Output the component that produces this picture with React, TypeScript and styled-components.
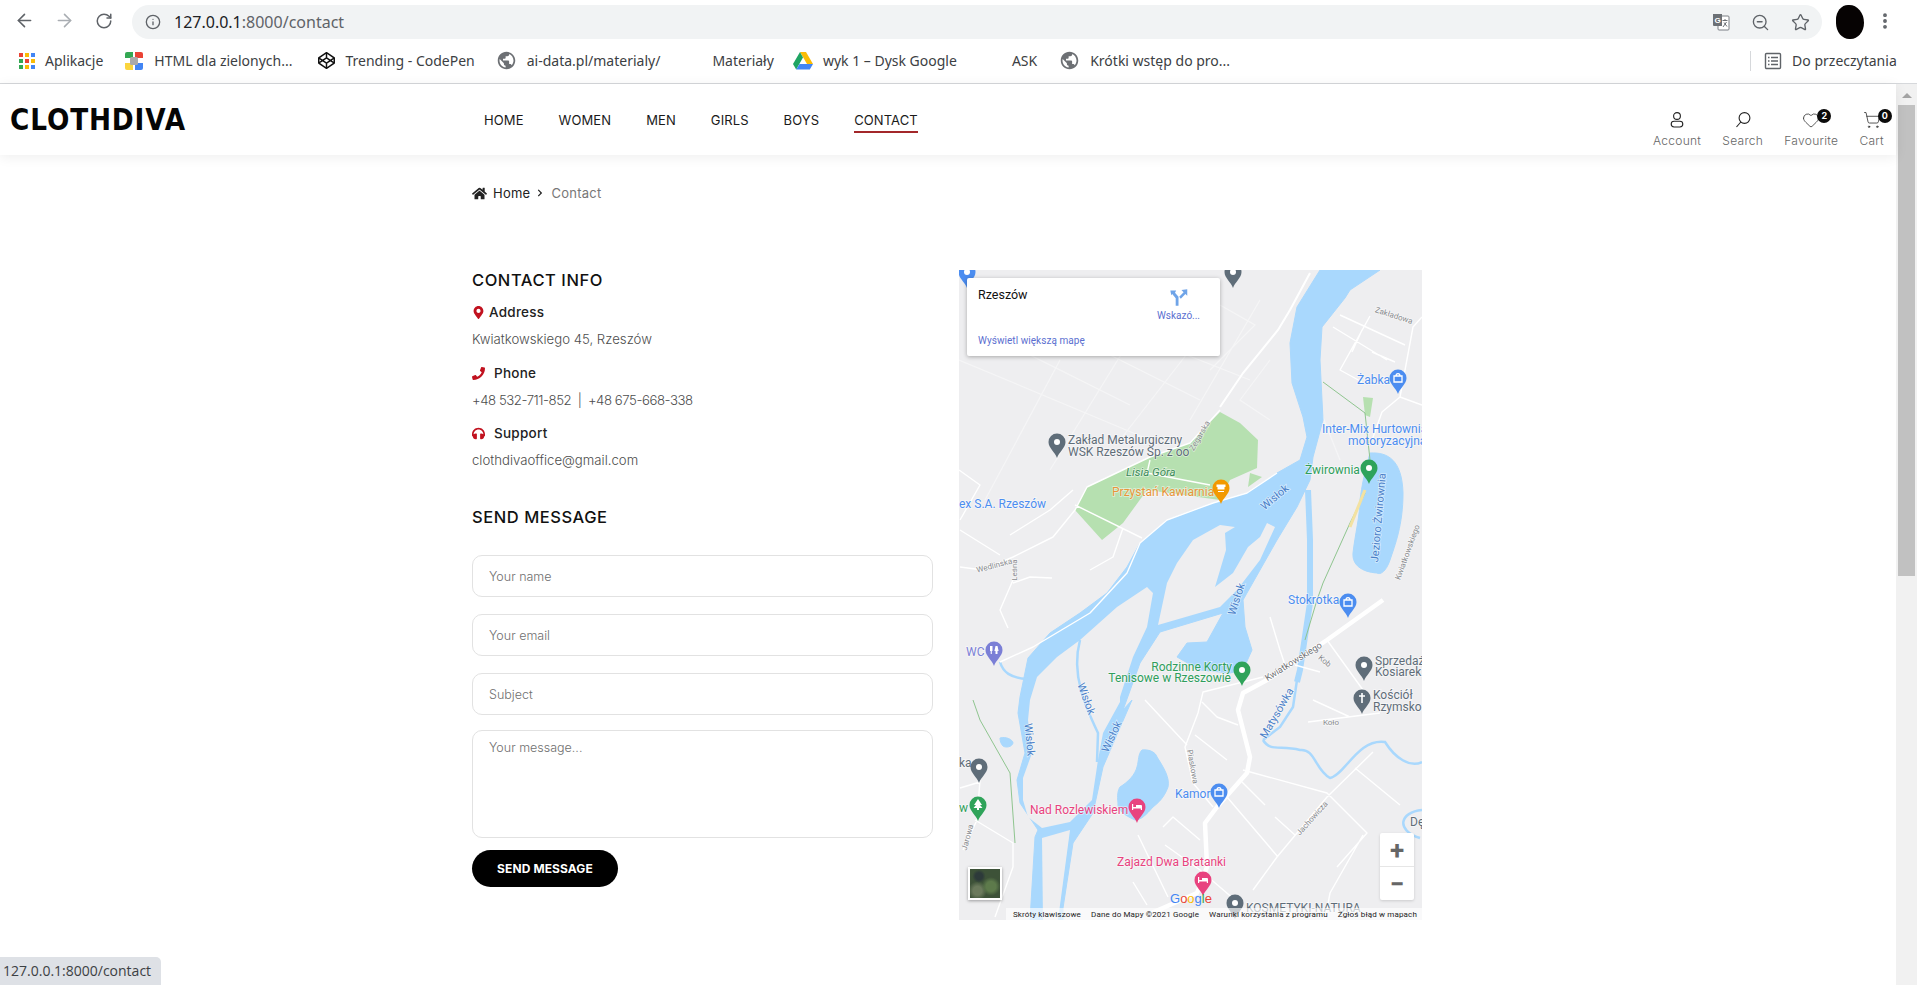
import React from "react";
import styled, { createGlobalStyle } from "styled-components";
import {
  ArrowLeft,
  ArrowRight,
  RotateCw,
  Info,
  ZoomOut,
  Star,
  EllipsisVertical,
  Heart,
  ShoppingCart,
} from "lucide-react";
import { FaHome, FaMapMarkerAlt, FaPhone, FaHeadphones, FaCodepen, FaChevronRight } from "react-icons/fa";
import { MdPublic } from "react-icons/md";

const SITE_FONT = `Inter, "Noto Sans", sans-serif`;
const BROWSER_FONT = `"Noto Sans", "Open Sans", sans-serif`;
const MAP_FONT = `Roboto, "Liberation Sans", sans-serif`;

const GlobalStyle = createGlobalStyle`
  html, body {
    margin: 0;
    padding: 0;
    height: 100%;
    overflow: hidden;
    background: #fff;
  }
  * { box-sizing: border-box; }
`;

const Screen = styled.div`
  position: relative;
  height: 985px;
  display: flex;
  flex-direction: column;
  overflow: hidden;
  font-family: ${SITE_FONT};
`;

/* browser chrome */
const Toolbar = styled.div`
  height: 41px;
  display: flex;
  align-items: center;
  padding-left: 13px;
  background: #fff;
  color: #5f6368;
`;
const NavIcon = styled.div<{ $faded?: boolean }>`
  width: 22px;
  height: 22px;
  margin-right: 18px;
  display: flex;
  align-items: center;
  justify-content: center;
  color: ${(p) => (p.$faded ? "#a9adb2" : "#5f6368")};
`;
const Omnibox = styled.div`
  width: 1690px;
  height: 34px;
  margin-left: -1px;
  margin-top: 3px;
  border-radius: 17px;
  background: #f1f3f4;
  display: flex;
  align-items: center;
  padding: 0 13px;
`;
const Url = styled.div`
  margin-left: 13px;
  flex: 1;
  font: 400 16px ${BROWSER_FONT};
  color: #5f6368;
  span { color: #202124; }
`;
const OmniIcons = styled.div`
  display: flex;
  align-items: center;
  gap: 21px;
  margin-right: -1px;
`;
const Avatar = styled.div`
  width: 28px;
  height: 34px;
  margin-left: 14px;
  margin-top: 2px;
  border-radius: 45% 55% 50% 50%;
  background: #060303;
`;
const Kebab = styled.div`
  margin-left: 11px;
  color: #5f6368;
  display: flex;
`;
const Bookmarks = styled.div`
  height: 43px;
  display: flex;
  align-items: center;
  background: #fff;
  border-bottom: 1px solid #d6d8db;
  padding-bottom: 3px;
  font: 400 14px ${BROWSER_FONT};
  color: #3c4043;
`;
const Bookmark = styled.div<{ $left: number }>`
  display: flex;
  align-items: center;
  gap: 10px;
  margin-left: ${(p) => p.$left}px;
  white-space: nowrap;
`;
const BookmarkSep = styled.div`
  width: 1px;
  height: 20px;
  background: #d6d8db;
  margin-left: 520px;
`;

/* page */
const Viewport = styled.div`
  flex: 1;
  display: flex;
  min-height: 0;
`;
const Page = styled.div`
  flex: 1;
  min-width: 0;
  background: #fff;
`;
const Scrollbar = styled.div`
  width: 21px;
  background: #f1f1f1;
  display: flex;
  flex-direction: column;
  align-items: center;
  padding-top: 9px;
`;
const ScrollArrow = styled.div`
  width: 0;
  height: 0;
  border-left: 5px solid transparent;
  border-right: 5px solid transparent;
  border-bottom: 5px solid #a3a3a3;
`;
const ScrollThumb = styled.div`
  width: 17px;
  height: 471px;
  margin-top: 7px;
  background: #c1c1c1;
`;

const Header = styled.header`
  height: 71px;
  display: flex;
  align-items: center;
  background: #fff;
  box-shadow: 0 2px 12px rgba(0, 0, 0, 0.07);
  position: relative;
`;
const Logo = styled.div`
  width: 484px;
  padding-left: 10px;
  margin-top: -1px;
  font: 700 31px "DejaVu Sans", sans-serif;
  letter-spacing: 1px;
  color: #050505;
  transform-origin: 10px center;
  transform: scaleX(0.85);
  white-space: nowrap;
`;
const Nav = styled.nav`
  display: flex;
  gap: 35px;
  flex: 1;
  margin-top: 1px;
`;
const NavLink = styled.a<{ $active?: boolean }>`
  font-size: 13px;
  font-weight: 400;
  letter-spacing: 0.1px;
  color: #1a1a1a;
  padding-bottom: 3px;
  border-bottom: 2px solid ${(p) => (p.$active ? "#a3272a" : "transparent")};
  margin-top: 5px;
`;
const Tools = styled.div`
  display: flex;
  gap: 21px;
  padding-right: 12px;
  margin-top: 20px;
`;
const Tool = styled.div`
  position: relative;
  display: flex;
  flex-direction: column;
  align-items: center;
  gap: 4px;
  font-size: 12px;
  letter-spacing: 0.3px;
  font-weight: 300;
  color: #666;
  svg { color: #222; display: block; }
`;
const ToolBadge = styled.span`
  position: absolute;
  top: -2px;
  left: calc(50% + 6px);
  width: 14px;
  height: 14px;
  border-radius: 50%;
  background: #0b0b0b;
  color: #fff;
  font-size: 9px;
  font-weight: 700;
  line-height: 14px;
  letter-spacing: 0;
  text-align: center;
`;

const Content = styled.main`
  padding: 30px 0 0 472px;
`;
const Crumbs = styled.div`
  height: 16px;
  display: flex;
  align-items: center;
  font-size: 13px;
  color: #222;
  letter-spacing: 0.25px;
`;
const CrumbHome = styled.span`
  margin-left: 6px;
`;
const CrumbArrow = styled.span`
  display: flex;
  margin: 0 7px 0 6px;
`;
const CrumbCurrent = styled.span`
  color: #777;
`;
const Columns = styled.div`
  display: grid;
  grid-template-columns: 461px 463px;
  column-gap: 26px;
  margin-top: 69px;
`;
const Side = styled.section`
  display: flex;
  flex-direction: column;
`;
const Heading = styled.h2<{ $top: number }>`
  margin: ${(p) => p.$top}px 0 0;
  font-size: 16.5px;
  font-weight: 500;
  line-height: 20px;
  letter-spacing: 0.55px;
  color: #111;
`;
const InfoTitle = styled.div<{ $top: number; $gap: number }>`
  display: flex;
  align-items: center;
  gap: ${(p) => p.$gap}px;
  margin-top: ${(p) => p.$top}px;
  height: 18px;
  font-size: 13.5px;
  font-weight: 500;
  letter-spacing: 0.25px;
  color: #222;
  svg { color: #c1121f; }
`;
const InfoText = styled.div<{ $tight?: boolean }>`
  margin-top: 9px;
  height: 18px;
  line-height: 18px;
  font-size: 13.2px;
  font-weight: 300;
  letter-spacing: ${(p) => (p.$tight ? "-0.45px" : "0")};
  color: #4d4d4d;
  white-space: pre;
`;
const Form = styled.form`
  display: flex;
  flex-direction: column;
  margin-top: 28px;
`;
const Field = styled.input`
  width: 100%;
  height: 42px;
  margin-bottom: 17px;
  padding: 0 16px;
  border: 1px solid #e2e2e2;
  border-radius: 10px;
  outline: none;
  background: #fff;
  font: 300 12.5px ${SITE_FONT};
  &::placeholder { color: #6f6f6f; opacity: 1; }
`;
const Message = styled.textarea`
  width: 100%;
  height: 108px;
  margin-top: -2px;
  padding: 9px 16px;
  border: 1px solid #e2e2e2;
  border-radius: 10px;
  outline: none;
  resize: none;
  background: #fff;
  font: 300 12.5px ${SITE_FONT};
  &::placeholder { color: #6f6f6f; opacity: 1; }
`;
const SendButton = styled.button`
  width: 146px;
  height: 37px;
  margin-top: 12px;
  border: none;
  border-radius: 19px;
  background: #000;
  color: #fff;
  font: 700 12px ${SITE_FONT};
  letter-spacing: 0.1px;
`;

const StatusBubble = styled.div`
  position: absolute;
  left: 0;
  bottom: 0;
  width: 161px;
  height: 28px;
  padding-left: 3px;
  border-top-right-radius: 5px;
  background: #dee1e6;
  color: #3c4043;
  font: 400 14px/28px "Open Sans", ${BROWSER_FONT};
  white-space: nowrap;
`;

/* map */
const MapFrame = styled.div`
  position: relative;
  width: 463px;
  height: 650px;
  overflow: hidden;
  background: #eeeef0;
  svg.base { display: block; }
`;
const MapCard = styled.div`
  position: absolute;
  top: 8px;
  left: 8px;
  width: 253px;
  height: 78px;
  padding: 9px 11px 10px;
  background: #fff;
  border-radius: 2px;
  box-shadow: 0 1px 4px rgba(0, 0, 0, 0.3);
  font-family: ${MAP_FONT};
  display: grid;
  grid-template-columns: 1fr auto;
`;
const PlaceName = styled.div`
  font-size: 12.5px;
  font-weight: 400;
  color: #111;
`;
const Directions = styled.div`
  display: flex;
  flex-direction: column;
  align-items: center;
  gap: 2px;
  margin-right: 9px;
  font-size: 10px;
  color: #5b6fd0;
`;
const BiggerMap = styled.div`
  grid-column: 1 / 3;
  align-self: end;
  font-size: 10px;
  letter-spacing: 0.05px;
  color: #5b6fd0;
`;
const ZoomBox = styled.div`
  position: absolute;
  right: 8px;
  bottom: 20px;
  width: 34px;
  height: 67px;
  display: flex;
  flex-direction: column;
  background: #fff;
  border-radius: 2px;
  box-shadow: 0 1px 3px rgba(0, 0, 0, 0.15);
`;
const ZoomButton = styled.div<{ $top?: boolean }>`
  flex: 1;
  display: flex;
  align-items: center;
  justify-content: center;
  position: relative;
  color: #666;
  font: 700 26px/1 ${MAP_FONT};
  border-top: ${(p) => (p.$top ? "none" : "1px solid #e6e6e6")};
`;
const Satellite = styled.div`
  position: absolute;
  left: 9px;
  bottom: 20px;
  width: 34px;
  height: 33px;
  border: 2px solid #fff;
  box-shadow: 0 1px 3px rgba(0, 0, 0, 0.35);
  background:
    radial-gradient(circle at 30% 25%, #2d3a3a 0 12%, transparent 22%),
    radial-gradient(circle at 70% 60%, #5d7a4b 0 18%, transparent 34%),
    radial-gradient(circle at 25% 75%, #6b7a5c 0 14%, transparent 30%),
    #3d5238;
`;
const Attribution = styled.div`
  position: absolute;
  right: 0;
  bottom: 0;
  left: 47px;
  height: 12px;
  display: flex;
  justify-content: flex-end;
  align-items: center;
  gap: 10px;
  padding-right: 5px;
  background: rgba(255, 255, 255, 0.65);
  font: 400 8px ${MAP_FONT};
  letter-spacing: 0.15px;
  color: #222;
  white-space: nowrap;
`;
const MapText = styled.text<{ $color: string; $size?: number; $italic?: boolean }>`
  font-family: ${MAP_FONT};
  font-size: ${(p) => p.$size ?? 12}px;
  font-style: ${(p) => (p.$italic ? "italic" : "normal")};
  fill: ${(p) => p.$color};
  paint-order: stroke;
  stroke: rgba(255, 255, 255, 0.55);
  stroke-width: 1.5px;
`;

const GRAY = "#5f6d79";
const BLUE = "#4c8df0";
const GREEN = "#2f9e5c";
const PINK = "#e8437f";
const ORANGE = "#e8953a";
const RIVER = "#4a80c8";
const STREET = "#8a8c90";

const WATER = "#a9d8fd";
const LAND = "#eeeef0";

const water = [
  // main river and both western branches
  "M1320 270 L1380 270 L1350 290 L1345 298 L1322 327 L1320 360 L1323 420 L1313 457 L1310 480 L1297 507 L1277 540 L1243 600 L1245 627 L1252 650 L1243 670 L1230 673 L1200 670 L1177 657 L1187 643 L1207 642 L1223 613 L1160 632 L1140 663 L1123 710 L1132 700 L1103 767 L1093 813 L1073 843 L1063 908 L1063 920 L1030 920 L1035 837 L1038 830 L1020 803 L1017 780 L1025 753 L1018 713 L1020 697 L1028 658 L1050 633 L1080 613 L1107 593 L1127 567 L1140 543 L1167 520 L1213 503 L1247 493 L1277 473 L1300 460 L1307 437 L1303 417 L1292 383 L1290 343 L1297 307 Z",
  // Zwirownia lake
  "M1370 453 C1388 452 1402 460 1403 493 C1403 525 1395 545 1390 560 C1386 572 1380 575 1377 573 C1362 572 1352 565 1353 553 C1355 535 1360 515 1360 500 C1362 485 1364 475 1370 453 Z",
  // Rozlewisko
  "M1142 750 C1150 749 1156 753 1157 757 C1164 768 1170 778 1168 787 C1164 798 1158 803 1153 807 C1146 815 1141 820 1135 820 C1124 815 1117 810 1118 803 C1117 795 1118 790 1120 787 C1128 782 1135 775 1137 767 C1139 760 1138 754 1142 750 Z",
  "M1000 738 C1006 736 1013 740 1013 743 C1012 747 1006 748 1003 746 C1001 744 1000 741 1000 738 Z",
];

const land = [
  "M1235 527 L1225 533 L1226 550 L1215 587 L1233 573 L1248 547 L1260 537 L1267 523 L1275 527 L1260 560 L1237 590 L1220 607 L1158 625 L1167 583 L1177 563 L1193 540 L1220 525 Z",
  "M1147 587 L1153 593 L1147 627 L1133 657 L1120 697 L1120 702 L1103 733 L1098 760 L1092 800 L1070 822 L1042 828 L1028 817 L1023 800 L1023 778 L1032 753 L1028 720 L1030 700 L1037 677 L1057 657 L1080 640 L1117 607 Z",
  "M1042 838 L1070 830 L1058 920 L1043 920 Z",
];

const parks = [
  "M1220 412 L1240 423 L1258 440 L1257 468 L1230 480 L1220 500 L1147 490 L1123 523 L1102 540 L1075 510 L1087 487 L1150 457 L1190 443 Z",
  "M1248 487 L1262 477 L1250 473 Z",
  "M1363 397 L1373 398 L1370 417 L1365 415 Z",
];

const streams = [
  "M1080 640 C1076 655 1076 672 1081 690 C1084 702 1088 712 1098 733 L1097 762",
  "M1297 680 L1293 707 L1280 727 L1263 740",
  "M1308 490 L1310 540 L1310 603 L1300 670 L1297 682",
  "M1000 662 C1003 672 1010 678 1028 679",
  "M1263 740 C1270 752 1280 745 1300 750 C1315 748 1315 770 1330 778 C1345 775 1358 738 1385 742 C1395 758 1410 768 1422 762",
  "M1422 810 C1400 812 1395 830 1420 838",
];

const minorRoads = [
  "M1220 410 L1190 443 L1150 457 L1087 487 L1075 510 L1053 537 L1013 557 L983 570 L960 567",
  "M1075 505 L1142 538",
  "M1150 460 L1147 473 L1210 485",
  "M1000 662 L1033 647 L1090 613 L1127 573 L1140 543 L1167 520 L1213 503 L1247 493 L1277 473",
  "M1013 580 L1000 610 L1008 628",
  "M1013 583 L1030 577 L1052 578",
  "M1123 528 L1113 557 L1090 570",
  "M1422 317 L1413 327 L1400 397 L1422 405",
  "M1400 397 L1382 412 L1372 440",
  "M1333 327 L1387 360",
  "M1340 315 L1405 345",
  "M1370 316 L1340 370 L1362 382",
  "M1362 330 L1352 352 M1372 352 L1395 362",
  "M1327 640 L1363 690",
  "M1313 700 L1350 717",
  "M1308 722 L1380 713",
  "M1243 770 L1327 793 L1367 833 L1337 867",
  "M1373 752 L1327 797 L1277 857 L1253 890",
  "M1355 768 L1400 805",
  "M1227 797 L1278 857",
  "M1242 782 L1265 805",
  "M1275 817 L1295 835",
  "M1263 677 L1203 692 L1198 713 L1185 747 L1193 783 L1213 807",
  "M1195 735 L1227 760",
  "M1202 702 L1217 717 L1238 725",
  "M1363 835 L1330 893 L1325 920",
  "M975 820 L1013 843 L1013 867 L995 917",
  "M963 850 L977 820 L980 780",
  "M960 788 L980 782",
  "M1138 835 L1168 897",
  "M1165 845 L1200 870 L1235 900",
  "M1133 882 L1147 905",
  "M1163 827 L1173 817 L1200 840",
  "M1145 700 L1187 745",
  "M1270 617 L1280 650 L1285 665",
  "M959 470 L980 485 L960 520",
  "M1000 555 L960 530",
  "M1073 490 L1050 510 L1010 535",
  "M1295 665 L1320 672",
];

const faintRoads = [
  "M959 360 L1150 440 M980 330 L1130 405 M1000 300 L1200 400 M1010 285 L1250 380",
  "M1060 360 L985 500 M1130 340 L1050 470 M1190 350 L1120 440 M1260 300 L1190 420",
  "M1270 360 L1240 400 L1270 420",
  "M1120 280 L1090 310 M1220 305 L1255 325 L1210 370",
  "M1340 460 L1320 410",
];

const trails = [
  "M973 700 L980 720 L1010 773 L1015 843",
  "M1323 382 L1365 413 L1370 460",
  "M1365 493 L1350 523 L1323 583 L1317 600 L1305 640",
];

const pins: [number, number, string, string?][] = [
  [967, 272, BLUE],
  [1233, 272, GRAY],
  [1057, 442, GRAY],
  [1398, 378, BLUE, "bag"],
  [1369, 468, "#2fa35a"],
  [1221, 488, "#f29900", "cup"],
  [1348, 602, BLUE, "bag"],
  [994, 650, "#7b7fd6", "wc"],
  [1242, 670, "#2fa35a"],
  [1364, 665, GRAY],
  [1362, 698, GRAY, "cross"],
  [979, 767, GRAY],
  [978, 805, "#2fa35a", "tree"],
  [1137, 807, PINK, "bed"],
  [1219, 792, BLUE, "bag"],
  [1203, 880, PINK, "bed"],
  [1235, 903, GRAY],
];

const labels: [string, number, number, string, number?, number?, ("end" | "middle")?, boolean?][] = [
  ["Zakład Metalurgiczny", 1068, 444, GRAY],
  ["WSK Rzeszów Sp. z oo", 1068, 456, GRAY],
  ["Lisia Góra", 1126, 476, "#3c8a5a", 11.5, 0, undefined, true],
  ["Przystań Kawiarnia", 1112, 496, ORANGE],
  ["ex S.A. Rzeszów", 959, 508, BLUE],
  ["Żabka", 1357, 384, BLUE],
  ["Inter-Mix Hurtownia", 1322, 433, BLUE],
  ["motoryzacyjna", 1348, 445, BLUE],
  ["Żwirownia", 1305, 474, GREEN],
  ["Stokrotka", 1288, 604, BLUE],
  ["Rodzinne Korty", 1232, 671, GREEN, 12, 0, "end"],
  ["Tenisowe w Rzeszowie", 1231, 682, GREEN, 12, 0, "end"],
  ["WC", 966, 656, "#7b7fd6"],
  ["Sprzedaż", 1375, 665, GRAY],
  ["Kosiarek", 1375, 676, GRAY],
  ["Kościół", 1373, 699, GRAY],
  ["Rzymskol", 1373, 711, GRAY],
  ["Nad Rozlewiskiem", 1030, 814, PINK],
  ["Kamor", 1175, 798, BLUE],
  ["Zajazd Dwa Bratanki", 1117, 866, PINK],
  ["KOSMETYKI-NATURA", 1246, 912, GRAY],
  ["ka", 959, 767, GRAY],
  ["w", 959, 812, GREEN],
  ["Dę", 1410, 826, GRAY],
  ["Wisłok", 1277, 500, RIVER, 11, -40, "middle"],
  ["Wisłok", 1240, 600, RIVER, 11, -72, "middle"],
  ["Wisłok", 1083, 700, RIVER, 11, 70, "middle"],
  ["Wisłok", 1026, 740, RIVER, 11, 85, "middle"],
  ["Wisłok", 1115, 738, RIVER, 11, -65, "middle"],
  ["Jezioro Żwirownia", 1382, 518, RIVER, 11, -85, "middle"],
  ["Matysówka", 1280, 715, RIVER, 11, -60, "middle"],
  ["Zakładowa", 1393, 318, STREET, 8, 18, "middle"],
  ["Zegarska", 1202, 437, STREET, 8, -60, "middle"],
  ["Kwiatkowskiego", 1410, 553, STREET, 8, -70, "middle"],
  ["Kwiatkowskiego", 1295, 664, "#6f7175", 9, -32, "middle"],
  ["Wedlinska", 995, 568, STREET, 8, -15, "middle"],
  ["Leśna", 1017, 570, STREET, 8, -90, "middle"],
  ["Piaskowa", 1190, 767, STREET, 8, 80, "middle"],
  ["Jachowicza", 1314, 820, STREET, 8, -48, "middle"],
  ["Koło", 1331, 725, STREET, 8, 0, "middle"],
  ["Kob", 1323, 663, STREET, 8, 40, "middle"],
  ["Jarowa", 970, 838, STREET, 8, -75, "middle"],
];

const PinGlyph = ({ kind }: { kind?: string }) => {
  if (kind === "cross") return <path d="M0 -5V5M-3 -2H3" stroke="#fff" strokeWidth="1.6" />;
  if (kind === "tree") return <path d="M0 -6L4 0H2L4.5 3H1V5H-1V3H-4.5L-2 0H-4Z" fill="#fff" />;
  if (kind === "cup") return <path d="M-4.5 -3.5H4.5V-1H3.5V1.5H-3.5V-1H-4.5ZM-3 3H3V4H-3Z" fill="#fff" />;
  if (kind === "bed") return <path d="M-5 -3H-3.8V0H-1V-2H4A1 1 0 0 1 5 -1V3H3.8V1.5H-3.8V3H-5Z" fill="#fff" />;
  if (kind === "bag") return <path d="M-4 -2H4V4H-4ZM-2 -2A2 2.4 0 0 1 2 -2" fill="none" stroke="#fff" strokeWidth="1.3" />;
  if (kind === "wc") return <path d="M-4 -4H-1.5V1H-2.2V4H-3.3V1H-4ZM1.5 -4H3.5L4.6 1H3.5V4H1.5V1H.4Z" fill="#fff" />;
  return <circle r="3" fill="#fff" />;
};

const MapDrawing = () => (
  <svg className="base" width="463" height="650" viewBox="959 270 463 650">
    <rect x="959" y="270" width="463" height="650" fill={LAND} />
    <path d={faintRoads.join(" ")} fill="none" stroke="#f5f5f6" strokeWidth="1.2" />
    {parks.map((d) => (
      <path key={d} d={d} fill="#b6e0b0" />
    ))}
    {water.map((d) => (
      <path key={d} d={d} fill={WATER} strokeLinejoin="round" stroke={WATER} strokeWidth="1" />
    ))}
    {land.map((d) => (
      <path key={d} d={d} fill={LAND} strokeLinejoin="round" />
    ))}
    {streams.map((d) => (
      <path key={d} d={d} fill="none" stroke={WATER} strokeWidth={d.startsWith("M1308") ? 6 : 2.5} />
    ))}
    <path d={minorRoads.join(" ")} fill="none" stroke="#fff" strokeWidth="1.4" strokeLinejoin="round" />
    <path
      d="M1310 273 L1290 310 L1278 330 L1243 373 L1220 407"
      fill="none"
      stroke="#fff"
      strokeWidth="2"
    />
    <path
      d="M1383 600 L1327 640 L1267 680 L1243 693 L1238 710 L1250 757 L1247 773 L1217 807 L1205 823 L1207 867 L1197 893 L1147 915"
      fill="none"
      stroke="#fff"
      strokeWidth="4.5"
      strokeLinejoin="round"
    />
    <path d={trails.join(" ")} fill="none" stroke="#8fc58f" strokeWidth="1" />
    <path d="M1365 490 L1350 527" fill="none" stroke="#f3e2a2" strokeWidth="3" />
    {labels.map(([text, x, y, color, size, rotate, anchor, italic]) => (
      <MapText
        key={text + x}
        x={x}
        y={y}
        $color={color}
        $size={size}
        $italic={italic}
        textAnchor={anchor}
        transform={rotate ? `rotate(${rotate} ${x} ${y})` : undefined}
      >
        {text}
      </MapText>
    ))}
    {pins.map(([x, y, color, kind]) => (
      <g key={`${x}-${y}`} transform={`translate(${x} ${y})`}>
        <path d="M0 16C-2 10 -8.5 6 -8.5 0A8.5 8.5 0 1 1 8.5 0C8.5 6 2 10 0 16Z" fill={color} />
        <PinGlyph kind={kind} />
      </g>
    ))}
    <text x="1170" y="903" fontFamily="'Liberation Sans', sans-serif" fontSize="13" fontWeight="400">
      <tspan fill="#4285f4">G</tspan>
      <tspan fill="#ea4335">o</tspan>
      <tspan fill="#fbbc05">o</tspan>
      <tspan fill="#4285f4">g</tspan>
      <tspan fill="#34a853">l</tspan>
      <tspan fill="#ea4335">e</tspan>
    </text>
  </svg>
);

const AppsIcon = () => {
  const colors = ["#ea4335", "#fbbc05", "#4285f4", "#34a853", "#ea4335", "#fbbc05", "#34a853", "#fbbc05", "#4285f4"];
  return (
    <svg width="16" height="16" viewBox="0 0 16 16">
      {colors.map((c, i) => (
        <rect key={i} x={(i % 3) * 6} y={Math.floor(i / 3) * 6} width="4" height="4" fill={c} />
      ))}
    </svg>
  );
};

const HtmlIcon = () => (
  <svg width="20" height="20" viewBox="0 0 20 20">
    <path d="M1 3a2 2 0 0 1 2-2h6v6H1z" fill="#34a853" />
    <path d="M11 1h6a2 2 0 0 1 2 2v4h-8z" fill="#ea4335" />
    <path d="M1 12h8v7H3a2 2 0 0 1-2-2z" fill="#fbd53e" />
    <path d="M11 12h8v5a2 2 0 0 1-2 2h-6z" fill="#4285f4" />
    <rect x="6" y="6" width="8" height="8" rx="1.5" fill="#aaa" />
  </svg>
);

const DriveIcon = () => (
  <svg width="20" height="18" viewBox="0 0 20 18">
    <path d="M7 0h6l7 12h-6z" fill="#fbbc05" />
    <path d="M7 0l3 5.5L3.2 17.5 0 12z" fill="#1fa463" />
    <path d="M3.2 17.5L6.5 12H20l-3.2 5.5z" fill="#4285f4" />
  </svg>
);

const TranslateIcon = () => (
  <svg width="18" height="18" viewBox="0 0 18 18">
    <rect x="6" y="3" width="11" height="14" rx="1" fill="#fff" stroke="#7b7f84" />
    <path d="M1 1h9v12H2a1 1 0 0 1-1-1z" fill="#6c7075" />
    <text x="2.6" y="10" fontSize="8" fontWeight="700" fill="#fff" fontFamily="'Liberation Sans', sans-serif">
      G
    </text>
    <path d="M10.5 7.5h5M13 6v1.5M11 14l3.5-5M12 9.5l3 4" stroke="#6c7075" strokeWidth="1" fill="none" />
  </svg>
);

const ReadingIcon = () => (
  <svg width="18" height="18" viewBox="0 0 18 18" fill="none" stroke="#5f6368" strokeWidth="1.4">
    <rect x="1.5" y="1.5" width="15" height="15" rx="1" />
    <path d="M4 5.5h1.5M7 5.5h7M4 9h1.5M7 9h7M4 12.5h1.5M7 12.5h7" />
  </svg>
);

const AccountIcon = () => (
  <svg width="18" height="18" viewBox="0 0 18 18" fill="none" stroke="#222" strokeWidth="1.1">
    <circle cx="9" cy="5" r="3.4" />
    <rect x="3.2" y="10.2" width="11.6" height="5.8" rx="2.9" />
  </svg>
);

const SearchIcon = () => (
  <svg width="18" height="18" viewBox="0 0 18 18" fill="none" stroke="#222" strokeWidth="1.1">
    <circle cx="10.5" cy="7" r="5.4" />
    <path d="M6.8 11 L2.5 16" />
  </svg>
);

const DirectionsIcon = () => (
  <svg width="21" height="21" viewBox="0 0 18 18" fill="#6fa4e8">
    <path d="M2 3h5l-1 2 3 3.4V16H6.6V9.6L3.6 6 2.8 7z" />
    <path d="M16.5 2v5.5l-1.6-1.6L11 10 9.6 8.4 13.4 4.4 11.5 2.5z" />
  </svg>
);

const bookmarks = [
  { left: 19, icon: <AppsIcon />, text: "Aplikacje" },
  { left: 21, icon: <HtmlIcon />, text: "HTML dla zielonych..." },
  { left: 26, icon: <FaCodepen size={17} color="#111" />, text: "Trending - CodePen" },
  { left: 21, icon: <MdPublic size={21} color="#6d7074" />, text: "ai-data.pl/materialy/" },
  { left: 52, text: "Materiały" },
  { left: 19, icon: <DriveIcon />, text: "wyk 1 – Dysk Google" },
  { left: 55, text: "ASK" },
  { left: 22, icon: <MdPublic size={21} color="#6d7074" />, text: "Krótki wstęp do pro..." },
];

const navLinks = ["HOME", "WOMEN", "MEN", "GIRLS", "BOYS", "CONTACT"];

const App = () => (
  <Screen>
    <GlobalStyle />
    <Toolbar>
      <NavIcon>
        <ArrowLeft size={21} strokeWidth={1.8} />
      </NavIcon>
      <NavIcon $faded>
        <ArrowRight size={21} strokeWidth={1.8} />
      </NavIcon>
      <NavIcon>
        <RotateCw size={18} strokeWidth={2} />
      </NavIcon>
      <Omnibox>
        <Info size={16} strokeWidth={2} />
        <Url>
          <span>127.0.0.1</span>:8000/contact
        </Url>
        <OmniIcons>
          <TranslateIcon />
          <ZoomOut size={19} strokeWidth={1.7} />
          <Star size={19} strokeWidth={1.7} />
        </OmniIcons>
      </Omnibox>
      <Avatar />
      <Kebab>
        <EllipsisVertical size={20} strokeWidth={2.6} />
      </Kebab>
    </Toolbar>
    <Bookmarks>
      {bookmarks.map((b) => (
        <Bookmark key={b.text} $left={b.left}>
          {b.icon}
          <span>{b.text}</span>
        </Bookmark>
      ))}
      <BookmarkSep />
      <Bookmark $left={13}>
        <ReadingIcon />
        <span>Do przeczytania</span>
      </Bookmark>
    </Bookmarks>
    <Viewport>
      <Page>
        <Header>
          <Logo>CLOTHDIVA</Logo>
          <Nav>
            {navLinks.map((l) => (
              <NavLink key={l} $active={l === "CONTACT"}>
                {l}
              </NavLink>
            ))}
          </Nav>
          <Tools>
            <Tool>
              <AccountIcon />
              Account
            </Tool>
            <Tool>
              <SearchIcon />
              Search
            </Tool>
            <Tool>
              <Heart size={18} strokeWidth={1} />
              <ToolBadge>2</ToolBadge>
              Favourite
            </Tool>
            <Tool>
              <ShoppingCart size={18} strokeWidth={1} />
              <ToolBadge>0</ToolBadge>
              Cart
            </Tool>
          </Tools>
        </Header>
        <Content>
          <Crumbs>
            <FaHome size={15} />
            <CrumbHome>Home</CrumbHome>
            <CrumbArrow>
              <FaChevronRight size={8} />
            </CrumbArrow>
            <CrumbCurrent>Contact</CrumbCurrent>
          </Crumbs>
          <Columns>
            <Side>
              <Heading $top={0}>CONTACT INFO</Heading>
              <InfoTitle $top={13} $gap={4}>
                <FaMapMarkerAlt size={13} />
                Address
              </InfoTitle>
              <InfoText>Kwiatkowskiego 45, Rzeszów</InfoText>
              <InfoTitle $top={16} $gap={9}>
                <FaPhone size={13} />
                Phone
              </InfoTitle>
              <InfoText $tight>{"+48 532-711-852  |  +48 675-668-338"}</InfoText>
              <InfoTitle $top={15} $gap={9}>
                <FaHeadphones size={13} />
                Support
              </InfoTitle>
              <InfoText>clothdivaoffice@gmail.com</InfoText>
              <Heading $top={38}>SEND MESSAGE</Heading>
              <Form>
                <Field placeholder="Your name" />
                <Field placeholder="Your email" />
                <Field placeholder="Subject" />
                <Message placeholder="Your message..." />
                <SendButton type="button">SEND MESSAGE</SendButton>
              </Form>
            </Side>
            <MapFrame>
              <MapDrawing />
              <MapCard>
                <PlaceName>Rzeszów</PlaceName>
                <Directions>
                  <DirectionsIcon />
                  Wskazó...
                </Directions>
                <BiggerMap>Wyświetl większą mapę</BiggerMap>
              </MapCard>
              <ZoomBox>
                <ZoomButton $top>+</ZoomButton>
                <ZoomButton>−</ZoomButton>
              </ZoomBox>
              <Satellite />
              <Attribution>
                <span>Skróty klawiszowe</span>
                <span>Dane do Mapy ©2021 Google</span>
                <span>Warunki korzystania z programu</span>
                <span>Zgłoś błąd w mapach</span>
              </Attribution>
            </MapFrame>
          </Columns>
        </Content>
      </Page>
      <Scrollbar>
        <ScrollArrow />
        <ScrollThumb />
      </Scrollbar>
    </Viewport>
    <StatusBubble>127.0.0.1:8000/contact</StatusBubble>
  </Screen>
);

export default App;
